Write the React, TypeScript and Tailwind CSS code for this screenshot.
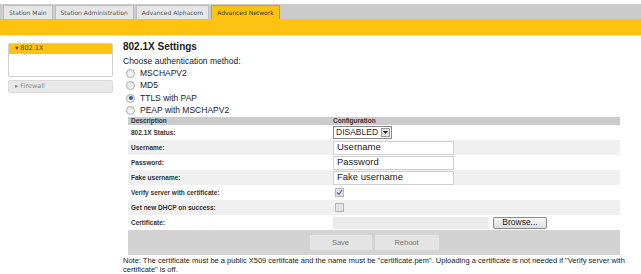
import React from "react";

const tabs = ["Station Main", "Station Administration", "Advanced Alphacom", "Advanced Network"];

const rows: { label: string; kind: string; value?: string }[] = [
  { label: "802.1X Status:", kind: "select", value: "DISABLED" },
  { label: "Username:", kind: "text", value: "Username" },
  { label: "Password:", kind: "text", value: "Password" },
  { label: "Fake username:", kind: "text", value: "Fake username" },
  { label: "Verify server with certificate:", kind: "check", value: "on" },
  { label: "Get new DHCP on success:", kind: "check" },
  { label: "Certificate:", kind: "file" },
];

function Radio({ checked }: { checked?: boolean }) {
  return (
    <span className="w-[9px] h-[9px] rounded-full border border-[#a8a8a8] bg-gradient-to-b from-[#e6e6e6] to-[#fafafa] flex items-center justify-center">
      {checked && <span className="w-[4px] h-[4px] rounded-full bg-[#2a5d9a]" />}
    </span>
  );
}

function Check({ checked }: { checked?: boolean }) {
  return (
    <span className="w-[9px] h-[9px] border border-[#b5b5b5] bg-[#e2e2e2] flex items-center justify-center">
      {checked && (
        <svg width="7" height="7" viewBox="0 0 7 7">
          <path d="M1 3.5 L3 5.5 L6 1" stroke="#4a5fa0" strokeWidth="1.1" fill="none" />
        </svg>
      )}
    </span>
  );
}

export default function App() {
  return (
    <div className="w-[641px] h-[274px] bg-white overflow-hidden font-['Liberation_Sans',Arial,sans-serif] text-[#222]">
      <div className="mt-[4px] bg-[#cccccc] h-[15px] flex items-end pl-[3px] gap-[2px]">
        {tabs.map((t, i) => (
          <div
            key={t}
            className={
              i === 3
                ? "h-[14px] px-[5px] flex items-center bg-[#fec312] border border-b-0 border-[#c9a020] text-[6px] text-[#333] font-['DejaVu_Sans',sans-serif]"
                : "h-[14px] px-[5px] flex items-center bg-[#e6e6e6] border border-b-0 border-[#bdbdbd] text-[6px] text-[#555] font-['DejaVu_Sans',sans-serif]"
            }
          >
            {t}
          </div>
        ))}
      </div>
      <div className="h-[17px] bg-[#fec312] border-b border-[#fde49a]" />

      <div className="flex">
        <div className="w-[123px] pl-[8px] pt-[7px] pr-[10px] shrink-0">
          <div className="border border-[#cfcfcf] rounded-[2px] h-[34px] bg-white">
            <div className="h-[10px] bg-[#fec312] flex items-center pl-[6px] text-[6.5px] text-[#444] font-['DejaVu_Sans',sans-serif]">
              ▾ 802.1X
            </div>
          </div>
          <div className="mt-[3px] h-[13px] bg-[#e8e8e8] border border-[#dadada] rounded-[2px] flex items-center pl-[6px] text-[6.5px] text-[#888] font-['DejaVu_Sans',sans-serif]">
            ▸ Firewall
          </div>
        </div>

        <div className="flex-1 pt-[5px]">
          <div className="text-[10px] font-bold leading-[12px]">802.1X Settings</div>
          <div className="text-[8.5px] leading-[10px] mt-[3px]">Choose authentication method:</div>
          <div className="flex flex-col mt-[1px]">
            {["MSCHAPV2", "MD5", "TTLS with PAP", "PEAP with MSCHAPV2"].map((m, i) => (
              <div key={m} className="h-[12.5px] flex items-center gap-[5px] pl-[3px] text-[8.5px]">
                <Radio checked={i === 2} />
                {m}
              </div>
            ))}
          </div>

          <div className="ml-[5px] w-[492px]">
            <div className="h-[8px] bg-[#cbcbcb] flex items-center text-[6.5px] font-bold text-[#333]">
              <div className="w-[205px] pl-[3px]">Description</div>
              <div>Configuration</div>
            </div>
            {rows.map((r, i) => (
              <div
                key={r.label}
                className={`h-[15px] flex items-center ${i % 2 === 1 ? "bg-[#f0f0f0]" : "bg-white"}`}
              >
                <div className="w-[205px] pl-[3px] text-[6.5px] font-bold text-[#333]">{r.label}</div>
                {r.kind === "select" && (
                  <div className="h-[13px] w-[59px] border border-[#888] bg-white flex items-center justify-between pl-[2px] pr-[1px] text-[8.5px]">
                    DISABLED
                    <span className="w-[9px] h-[9px] bg-[#e4e4e4] border border-[#999] flex items-center justify-center">
                      <svg width="5" height="3" viewBox="0 0 5 3">
                        <path d="M0 0 L5 0 L2.5 3 Z" fill="#222" />
                      </svg>
                    </span>
                  </div>
                )}
                {r.kind === "text" && (
                  <div className="h-[14px] w-[121px] border border-[#d0d0d0] bg-white flex items-center pl-[3px] text-[9.5px]">
                    {r.value}
                  </div>
                )}
                {r.kind === "check" && (
                  <div className="pl-[2px]">
                    <Check checked={!!r.value} />
                  </div>
                )}
                {r.kind === "file" && (
                  <div className="flex items-center gap-[5px]">
                    <div className="h-[12px] w-[155px] bg-[#ebebeb]" />
                    <div className="h-[12px] w-[54px] border border-[#8a8a8a] rounded-[2px] bg-gradient-to-b from-[#f6f6f6] to-[#dddddd] flex items-center justify-center text-[8.5px]">
                      Browse...
                    </div>
                  </div>
                )}
              </div>
            ))}
            <div className="h-[25px] bg-[#d3d3d3] flex items-center justify-center gap-[3px]">
              <div className="h-[15px] w-[62px] bg-[#e4e4e4] flex items-center justify-center text-[7.5px] text-[#777]">
                Save
              </div>
              <div className="h-[15px] w-[64px] bg-[#e4e4e4] flex items-center justify-center text-[7.5px] text-[#777]">
                Reboot
              </div>
            </div>
          </div>
          <div className="text-[7.5px] leading-[9px] mt-[1px] pr-[6px]">
            Note: The certificate must be a public X509 certifcate and the name must be "certificate.pem". Uploading a certificate is not needed if "Verify server with certificate" is off.
          </div>
        </div>
      </div>
    </div>
  );
}
